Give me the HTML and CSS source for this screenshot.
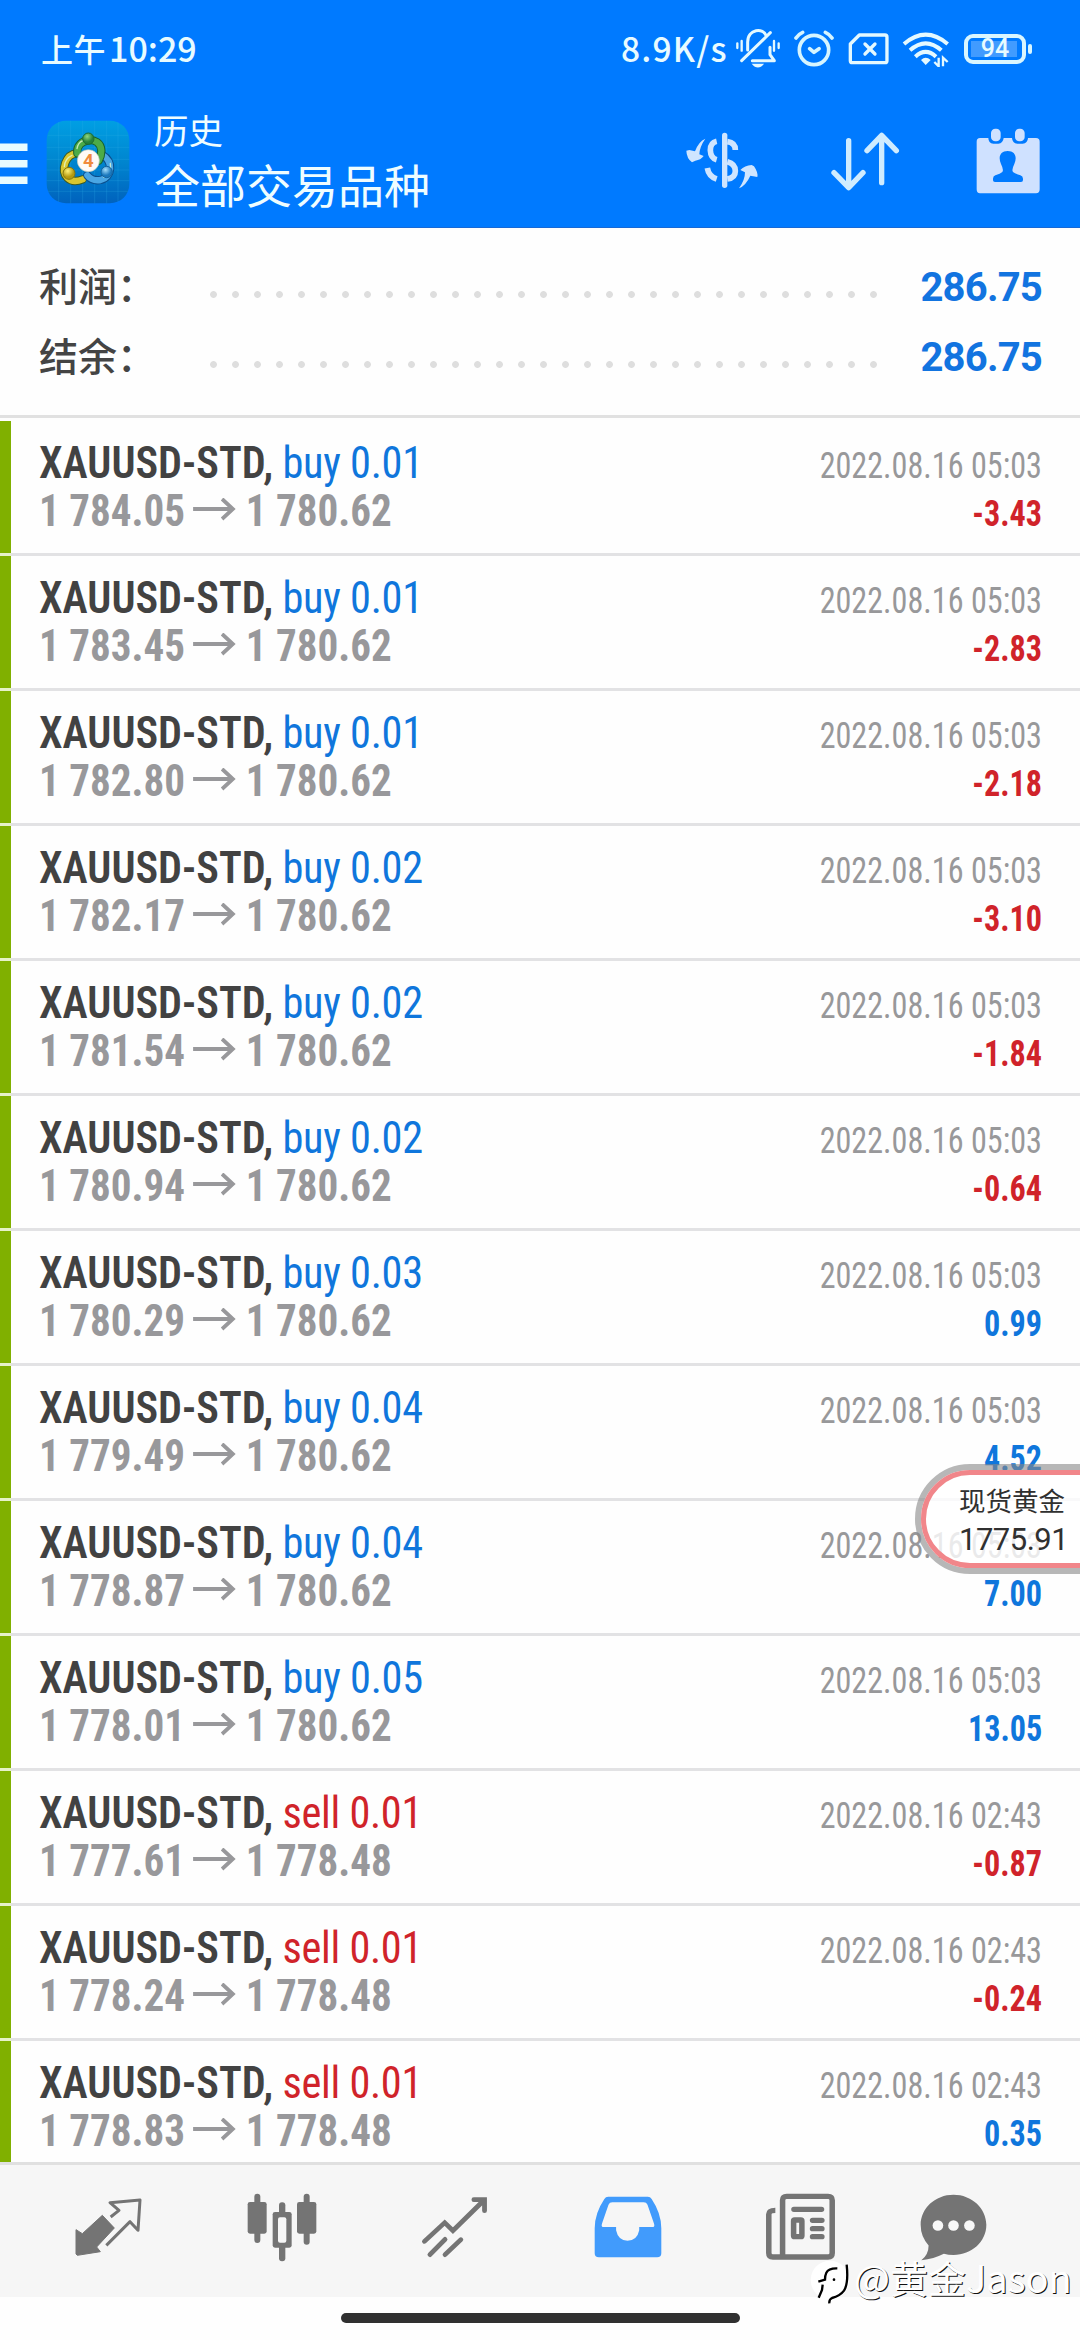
FILE: index.html
```html
<!DOCTYPE html>
<html lang="zh-CN">
<head>
<meta charset="utf-8">
<title>历史</title>
<link rel="stylesheet" href="styles.css">
</head>
<body>
<div class="screen">
  <header class="header">
    <div class="status">
      <div class="clock"><span class="ampm">上午</span><span>10:29</span></div>
      <div class="status-right">
        <span class="speed">8.9K/s</span>
        <svg class="s-bell" viewBox="12 24 138 126" width="46" height="42" fill="none" stroke="#e4f9ff" stroke-width="9" stroke-linecap="round" stroke-linejoin="round"><path d="M50 90V66C50 26 98 22 106 48M32 122L118 38M64 122H130L117 104V82" /><path d="M62 131H99Q81 154 62 131Z" fill="#e4f9ff" stroke="none"/><path d="M19 70V84M32 63V92M129 63V92M143 70V84" stroke-width="7"/></svg>
        <svg class="s-alarm" viewBox="190 24 120 120" width="40" height="40" fill="none" stroke="#d6f5ff" stroke-width="11" stroke-linecap="round" stroke-linejoin="round"><circle cx="250" cy="87" r="44"/><path d="M196 51Q204 39 216 34M304 51Q296 39 284 34M237 83L250 94L265 83"/></svg>
        <svg class="s-sim" viewBox="352 38 124 100" width="41.300" height="33.300" fill="none" stroke="#e4f9ff" stroke-width="10" stroke-linejoin="round" stroke-linecap="round"><path d="M386 47H463Q469 47 469 53V124Q469 130 463 130H365Q359 130 359 124V74Z"/><path d="M403 74L433 104M433 74L403 104"/></svg>
        <svg class="s-wifi" viewBox="516 32 144 110" width="48" height="36.700" fill="none" stroke="#e4f9ff" stroke-width="12"><path d="M522 71Q587 15 653 71M540 90Q587 48 634 90M556 109Q587 80 618 109"/><path d="M573 119Q587 106 602 119L587 134Z" fill="#e4f9ff" stroke="none"/><path d="M626 112V138L613 125M639 138V112L653 125" stroke-width="7"/></svg>
        <div class="battery"><span>94</span></div>
      </div>
    </div>
    <div class="toolbar">
      <svg class="menu" viewBox="0 0 28 42" width="28" height="42" fill="#e8fbff"><path d="M0 .5H27.500V8H0ZM0 17H27.500V24.500H0ZM0 33.500H27.500V41H0Z"/></svg>
      <svg class="logo" viewBox="48 60 252 252" width="84" height="84">
        <defs>
          <linearGradient id="sky" x1="0" y1="0" x2="0" y2="1"><stop offset="0" stop-color="#009fe3"/><stop offset=".5" stop-color="#0085cf"/><stop offset="1" stop-color="#0062bd"/></linearGradient>
          <radialGradient id="g" cx=".4" cy=".3"><stop offset="0" stop-color="#8fd67e"/><stop offset="1" stop-color="#25823b"/></radialGradient>
          <radialGradient id="y" cx=".4" cy=".3"><stop offset="0" stop-color="#fff27a"/><stop offset="1" stop-color="#b49a10"/></radialGradient>
          <radialGradient id="b" cx=".4" cy=".3"><stop offset="0" stop-color="#a4defc"/><stop offset="1" stop-color="#1b78bd"/></radialGradient>
        </defs>
        <rect x="50" y="62" width="248" height="248" rx="58" fill="url(#sky)"/>
        <path d="M86 66V306M122 62V310M158 62V310M194 62V310M230 62V310M264 66V306M54 106H294M50 142H298M50 178H298M50 210H298M50 242H298M54 274H294" stroke="#2fb2ea" stroke-opacity=".35" stroke-width="2"/>
        <g fill="none" stroke-linecap="round">
          <path d="M158 238C118 254 92 226 106 188Q116 162 140 160" stroke="#3d5a22" stroke-width="25"/>
          <path d="M158 238C118 254 92 226 106 188Q116 162 140 160" stroke="#d9c62e" stroke-width="19"/>
          <path d="M216 164C252 186 246 232 212 240Q186 244 172 226" stroke="#0b4f8e" stroke-width="25"/>
          <path d="M216 164C252 186 246 232 212 240Q186 244 172 226" stroke="#4aa6e4" stroke-width="19"/>
          <path d="M142 160C136 114 212 104 214 152Q214 168 206 182" stroke="#17612f" stroke-width="25"/>
          <path d="M142 160C136 114 212 104 214 152Q214 168 206 182" stroke="#4cab48" stroke-width="19"/>
          <path d="M103 200Q104 176 126 166M241 190Q246 216 222 232M141 146Q144 128 158 122" stroke="#e4f7cf" stroke-width="4" stroke-opacity=".8"/>
        </g>
        <g stroke-width="3"><circle cx="175" cy="116" r="17" fill="url(#g)" stroke="#1d6b31"/><circle cx="117" cy="220" r="18" fill="url(#y)" stroke="#83750f"/><circle cx="230" cy="216" r="17" fill="url(#b)" stroke="#13639f"/></g>
        <circle cx="175" cy="182" r="33" fill="#fffaf6" stroke="#bfc9b8" stroke-width="2"/>
        <text x="175" y="202" class="logo-num" text-anchor="middle">4</text>
      </svg>
      <div class="heading"><div class="h-small">历史</div><div class="h-big">全部交易品种</div></div>
      <svg class="t-money" viewBox="45 60 225 180" width="75" height="60" fill="none" stroke="#cfe5ff" stroke-width="16"><path d="M164 76V226" stroke-linecap="round"/><path d="M140 94Q121 98 121 121Q122 144 140 149M172 95Q196 98 196 120M172 155Q196 161 196 183Q196 204 172 207M112 174Q116 199 140 207" stroke-width="17"/><path d="M106 86Q86 94 75 124L58 120L49 122Q50 145 66 157L76 152Q92 150 101 138L88 133Q89 110 106 86ZM207 235Q228 226 241 197L262 201Q265 188 252 169L245 165Q224 166 211 180L225 187Q225 210 207 235Z" fill="#cfe5ff" stroke="none"/></svg>
      <svg class="t-sort" viewBox="480 60 210 186" width="70" height="62" fill="none" stroke="#cfecff" stroke-width="16" stroke-linecap="round" stroke-linejoin="round"><path d="M536 92V232M492 188L536 233L579 188M635 218V76M591 122L635 76L679 122"/></svg>
      <svg class="t-cal" viewBox="918 54 192 198" width="64" height="66"><path fill="#cfe1ff" fill-rule="evenodd" d="M930 84H955Q955 100 970 101H985Q999 100 1001 84H1026Q1027 100 1042 101H1058Q1073 100 1074 84H1098Q1109 84 1109 95V238Q1109 250 1098 250H930Q920 250 920 238V95Q920 84 930 84ZM1013 123C990 123 984 142 993 162Q1002 180 997 186Q991 191 976 196Q969 198 969 206V211Q969 216 975 216H1053Q1059 216 1059 210V206Q1059 198 1051 196Q1035 191 1029 186Q1024 180 1033 162C1042 142 1036 123 1013 123Z"/><rect x="963" y="56" width="29" height="38" rx="13" fill="#cfe1ff"/><rect x="1035" y="56" width="29" height="38" rx="13" fill="#cfe1ff"/></svg>
    </div>
  </header>

  <section class="summary">
    <div class="sum-row"><span class="sum-label">利润：</span><span class="dots"></span><span class="sum-value">286.75</span></div>
    <div class="sum-row"><span class="sum-label">结余：</span><span class="dots"></span><span class="sum-value">286.75</span></div>
  </section>

  <main class="deals" id="deals"></main>

  <nav class="nav">
    <div class="tab"><svg viewBox="105 55 201 180" width="67" height="60"><path fill="#747474" stroke="#747474" stroke-width="3" stroke-linejoin="round" d="M108 153L127 165L187 110L223 148L170 205L181 219L112 230L108 226Z"/><path fill="none" stroke="#747474" stroke-width="9" d="M212 115L237 95L210 72L300 64L294 155L270 129L199 200" stroke-linejoin="round"/></svg></div>
    <div class="tab"><svg viewBox="618 40 210 207" width="70" height="69" fill="#747474"><rect x="640" y="42" width="18" height="148" rx="9"/><rect x="620" y="67" width="57" height="95" rx="7"/><rect x="714" y="68" width="19" height="177" rx="9"/><rect x="695" y="97" width="57" height="107" rx="7"/><rect x="711" y="113" width="25" height="76" rx="6" fill="#f6f6f6"/><rect x="788" y="42" width="18" height="153" rx="9"/><rect x="768" y="67" width="58" height="95" rx="7"/></svg></div>
    <div class="tab"><svg viewBox="1220 165 198 192" width="68" height="64" preserveAspectRatio="none" fill="none" stroke="#747474" stroke-width="14" stroke-linecap="round"><path d="M1230 304L1289 248L1313 272L1404 180M1374 179H1405V212M1246 344L1290 298M1290 344L1336 299"/></svg></div>
    <div class="tab"><svg viewBox="156 168 197 186" width="68" height="62" preserveAspectRatio="none"><path fill="#419bfc" fill-rule="evenodd" d="M197 170H312Q319 170 323 177Q351 220 351 265V340Q351 352 339 352H170Q158 352 158 340V265Q158 220 186 177Q190 170 197 170ZM209 187Q201 187 198 194L179 251Q176 261 184 261H220V271Q226 302 253 302Q281 302 287 271V261H325Q333 261 330 251L311 194Q308 187 300 187Z"/></svg></div>
    <div class="tab"><svg viewBox="655 160 206 202" width="71" height="67.300" preserveAspectRatio="none" fill="none" stroke="#747474" stroke-width="16"><path d="M706 352V182Q706 170 718 170H838Q850 170 850 182V340Q850 352 838 352H678Q666 352 666 340V224Q666 212 685 212"/><path d="M739 209H819M793 242H820M793 267H820M793 291H820" stroke-linecap="round"/><rect x="738" y="241" width="24" height="50" rx="3"/></svg></div>
    <div class="tab last"><svg viewBox="358 40 202 202" width="67" height="67"><path fill="#747474" d="M459 42C514 42 558 83 558 133C558 184 514 224 459 224Q443 224 430 220Q400 235 362 240Q384 222 384 195Q360 169 360 133C360 83 404 42 459 42Z"/><g fill="#f8f8f8"><circle cx="412" cy="135" r="16"/><circle cx="459" cy="135" r="16"/><circle cx="507" cy="135" r="16"/></g></svg></div>
  </nav>
  <div class="gesture"><div class="home-bar"></div></div>

  <div class="ticker"><div class="ticker-inner"><span class="tk-name">现货黄金</span><span class="tk-price">1775.91</span></div></div>

  <div class="watermark">
    <svg viewBox="30 240 120 132" width="40" height="44"><circle cx="90" cy="300" r="58" fill="#fff"/><path d="M112 265Q86 264 79 278Q75 286 75 299L55 305M68 314L66 330L56 353M140 254Q146 310 132 332Q120 348 96 354Q87 358 88 370" fill="none" stroke="#000" stroke-width="7"/><circle cx="102" cy="299" r="4"/></svg>
    <span>@黄金Jason</span>
  </div>
</div>
<script src="app.js"></script>
</body>
</html>
```
FILE: styles.css
```css
* { box-sizing: border-box; }
body { margin: 0; background: #fff; font-family: Roboto, "Noto Sans CJK SC", sans-serif; }
svg { display: block; flex: none; }
.screen { position: relative; width: 1080px; height: 2340px; display: flex; flex-direction: column; overflow: hidden; background: #fefefe; }

.header { height: 228px; flex: none; background: #007aff; border-bottom: 1px solid #1769d6; color: #e8fbff; }
.status { height: 98px; display: flex; justify-content: space-between; align-items: center; padding: 0 48px 0 41px; font-family: "Noto Sans CJK SC", sans-serif; font-weight: 500; font-size: 34px; line-height: 48px; }
.clock { display: flex; align-items: baseline; margin-bottom: 3px; }
.ampm { font-size: 32px; margin-right: 3px; letter-spacing: .5px; }
.status-right { display: flex; align-items: center; }
.speed { font-size: 33.500px; letter-spacing: 1.200px; margin-right: 7px; margin-bottom: 3px; }
.s-bell { margin-right: 13px; }
.s-alarm { margin-right: 14px; }
.s-sim { margin-right: 13px; }
.s-wifi { margin-right: 14px; }
.battery { position: relative; width: 62px; height: 30px; border: 4px solid #d9f6ff; border-radius: 9px; display: flex; align-items: center; justify-content: center; margin-right: 6px; background: linear-gradient(#419bff, #419bff) 3px 3px / 46px 16px no-repeat; font-family: Roboto, sans-serif; font-size: 25px; line-height: 24px; }
.battery::after { content: ""; position: absolute; right: -10px; top: 6px; width: 4px; height: 10px; border-radius: 2px; background: #d9f6ff; }

.toolbar { height: 129px; display: flex; align-items: flex-start; }
.menu { margin-top: 45px; }
.logo { margin: 22px 0 0 18px; }
.logo-num { font: bold 56px Roboto, sans-serif; fill: #f08a3c; }
.heading { margin-left: 24px; flex: 1; font-family: "Noto Sans CJK SC", sans-serif; font-weight: 400; color: #effdff; }
.h-small { font-size: 34.500px; line-height: 44px; margin-top: 9px; }
.h-big { font-size: 46px; line-height: 60px; margin-top: 2px; }
.t-money { margin: 32px 70px 0 0; }
.t-sort { margin: 32px 76px 0 0; }
.t-cal { margin: 30px 40px 0 0; }

.summary { flex: none; padding: 24px 38px 23px 39px; border-bottom: 3px solid #e1e1e1; margin-bottom: 3px; }
.sum-row { height: 70px; display: flex; align-items: center; }
.sum-label { width: 171px; font-family: "Noto Sans CJK SC", sans-serif; font-weight: 500; font-size: 39px; line-height: 56px; color: #444; padding-bottom: 6px; }
.dots { width: 682px; height: 7px; margin-top: 14px; background: radial-gradient(circle at 3.500px 3.500px, #dedede 0 3px, transparent 3.800px) 0 0 / 22px 7px; }
.sum-value { flex: 1; text-align: right; font-weight: 700; font-size: 40px; line-height: 56px; padding-top: 2px; letter-spacing: -.8px; color: #1274e0; }

.deals { height: 1741px; flex: none; overflow: hidden; font-family: "Roboto Condensed", Roboto, sans-serif; font-stretch: 75%; }
.deal { height: 135px; border-left: 11px solid #80b000; position: relative; padding: 18px 38px 0 28px; }
.deal::after { content: ""; position: absolute; left: -11px; right: 0; bottom: 0; height: 3px; background: linear-gradient(90deg, #e6f2c8 11px, #e2e2e4 11px); }
.line { display: flex; justify-content: space-between; align-items: baseline; height: 48px; line-height: 48px; white-space: pre; }
.order, .prices { transform-origin: left; }
.time, .amount { transform: scaleX(.893); transform-origin: right; }
.order { transform: scaleX(.962); }
.symbol { font-size: 44px; font-weight: 600; color: #424242; }
.side { font-size: 44px; font-weight: 400; letter-spacing: -.3px; }
.buy, .profit { color: #0f76dc; }
.sell, .loss { color: #d0232a; }
.prices { transform: scaleX(.934); font-size: 44px; font-weight: 700; color: #98989b; display: flex; align-items: baseline; }
.arrow { margin: 0 10px 0 9px; }
.time { font-size: 36px; color: #98989a; }
.amount { font-size: 36px; font-weight: 700; }

.nav { height: 135px; flex: none; background: #f6f6f6; border-top: 3px solid #e0e0e0; display: flex; padding-left: 22px; align-items: flex-start; }
.tab { width: 173px; height: 124px; display: flex; justify-content: center; align-items: center; }
.tab.last { width: 133px; }
.gesture { height: 43px; display: flex; justify-content: center; padding-top: 16px; }
.home-bar { width: 399px; height: 10px; border-radius: 5px; background: #303030; }

.ticker { position: absolute; left: 915px; top: 1464px; width: 230px; height: 110px; border-radius: 55px; border: 6px solid rgba(135, 135, 135, .6); }
.ticker-inner { height: 98px; border: 5px solid #f1868a; border-radius: 49px; background: rgba(255, 255, 255, .8); padding-left: 33px; display: flex; flex-direction: column; color: #303030; }
.tk-name { font: 400 26.500px/36px "Noto Sans CJK SC", sans-serif; margin-top: 7px; }
.tk-price { font-size: 31px; line-height: 40px; letter-spacing: -.5px; margin-top: 2px; }

.watermark { position: absolute; left: 810px; top: 2260px; height: 44px; display: flex; align-items: center; gap: 4px; color: #fff; font: 400 38px/44px "Noto Sans CJK SC", sans-serif; text-shadow: 1px 1px 0 #111; white-space: nowrap; }
.watermark span { margin-top: -11px; }
```
FILE: app.js
```js
const deals = [
  ["buy", "0.01", "1 784.05", "1 780.62", "05:03", "-3.43"],
  ["buy", "0.01", "1 783.45", "1 780.62", "05:03", "-2.83"],
  ["buy", "0.01", "1 782.80", "1 780.62", "05:03", "-2.18"],
  ["buy", "0.02", "1 782.17", "1 780.62", "05:03", "-3.10"],
  ["buy", "0.02", "1 781.54", "1 780.62", "05:03", "-1.84"],
  ["buy", "0.02", "1 780.94", "1 780.62", "05:03", "-0.64"],
  ["buy", "0.03", "1 780.29", "1 780.62", "05:03", "0.99"],
  ["buy", "0.04", "1 779.49", "1 780.62", "05:03", "4.52"],
  ["buy", "0.04", "1 778.87", "1 780.62", "05:03", "7.00"],
  ["buy", "0.05", "1 778.01", "1 780.62", "05:03", "13.05"],
  ["sell", "0.01", "1 777.61", "1 778.48", "02:43", "-0.87"],
  ["sell", "0.01", "1 778.24", "1 778.48", "02:43", "-0.24"],
  ["sell", "0.01", "1 778.83", "1 778.48", "02:43", "0.35"]
];
const arrow = '<svg class="arrow" viewBox="0 0 46 28" width="46" height="28" fill="none" stroke="#98989b" stroke-width="4"><path d="M0 11H42M31 1L42.500 11L31 21"/></svg>';
document.getElementById("deals").innerHTML = deals.map(([side, lot, open, close, time, sum]) => `
  <article class="deal">
    <div class="line"><span class="order"><span class="symbol">XAUUSD-STD,</span><span class="side ${side}"> ${side} ${lot}</span></span><span class="time">2022.08.16 ${time}</span></div>
    <div class="line"><span class="prices">${open}${arrow}${close}</span><span class="amount ${sum[0] === "-" ? "loss" : "profit"}">${sum}</span></div>
  </article>`).join("");
```
